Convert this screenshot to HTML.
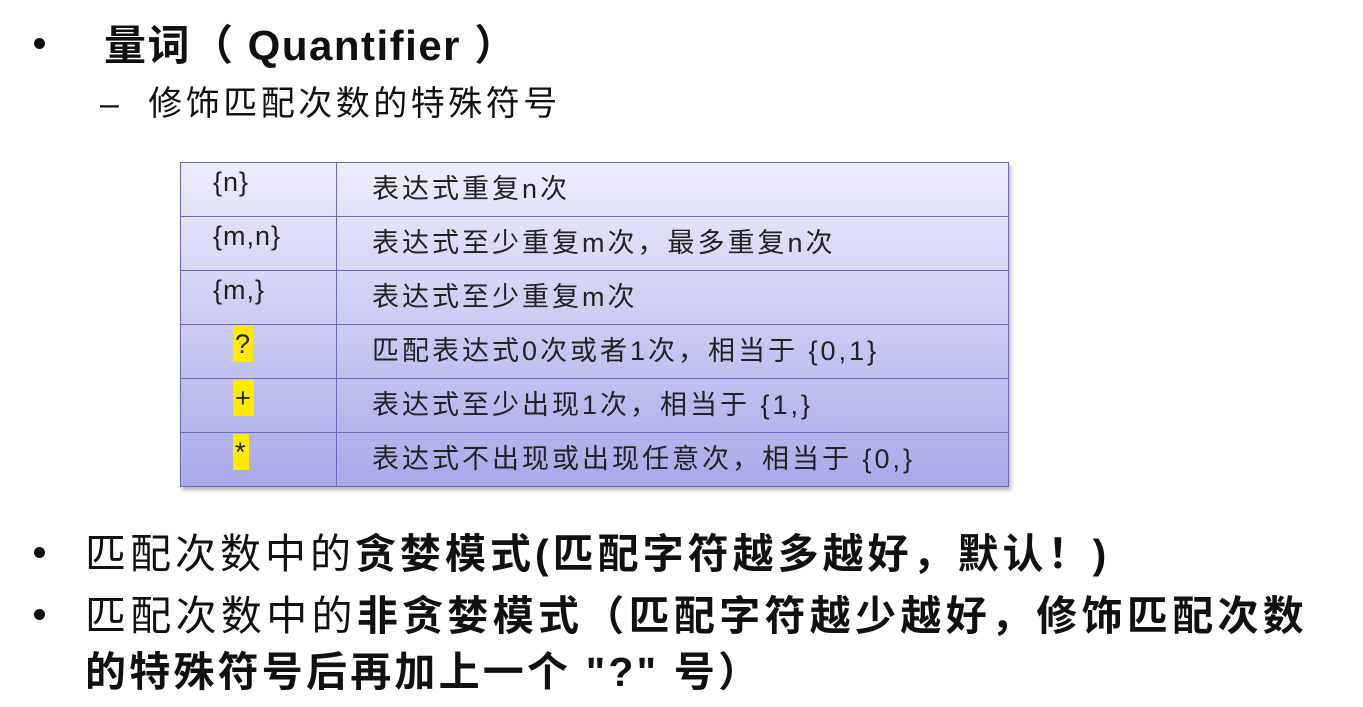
<!DOCTYPE html>
<html><head><meta charset="utf-8"><style>
body{margin:0;width:1363px;height:707px;background:#fff;position:relative;overflow:hidden;font-family:"Liberation Sans","Noto Sans CJK SC",sans-serif;color:#111}
.a{position:absolute;white-space:nowrap}
table{position:absolute;left:180px;top:162px;width:829px;height:325px;border-collapse:collapse;table-layout:fixed;background:linear-gradient(#ededfb,#a9a9ea);box-shadow:2px 3px 4px rgba(0,0,0,.3)}
td{border:1.5px solid #6a6ac0;font-size:27px;color:#222;padding:0;vertical-align:top;padding-top:4px;box-sizing:border-box;white-space:nowrap}
td.k{padding-left:32px;letter-spacing:1px}
td.v{padding-left:35px;letter-spacing:3px}
.y{background:#ffea00;padding:3px 2px}
.c{padding-left:20px}
.dot{position:absolute;width:11px;height:11px;border-radius:50%;background:#111}
</style></head><body>
<div class="dot" style="left:34px;top:38px"></div>
<div class="a" style="left:104px;top:12px;font-size:42px;font-weight:bold;letter-spacing:1.5px">量词（ Quantifier ）</div>
<div class="a" style="left:100px;top:76px;font-size:34px;letter-spacing:3.5px">–&nbsp; 修饰匹配次数的特殊符号</div>
<table>
<colgroup><col style="width:156px"><col></colgroup>
<tr><td class="k">{n}</td><td class="v">表达式重复n次</td></tr>
<tr><td class="k">{m,n}</td><td class="v">表达式至少重复m次，最多重复n次</td></tr>
<tr><td class="k">{m,}</td><td class="v">表达式至少重复m次</td></tr>
<tr><td class="k"><span class="c"><span class="y">?</span></span></td><td class="v">匹配表达式0次或者1次，相当于 {0,1}</td></tr>
<tr><td class="k"><span class="c"><span class="y">+</span></span></td><td class="v">表达式至少出现1次，相当于 {1,}</td></tr>
<tr><td class="k"><span class="c"><span class="y">*</span></span></td><td class="v">表达式不出现或出现任意次，相当于 {0,}</td></tr>
</table>
<div class="dot" style="left:34px;top:547px"></div>
<div class="a" style="left:85px;top:520px;font-size:41px;letter-spacing:4px">匹配次数中的<b>贪婪模式(匹配字符越多越好，默认！)</b></div>
<div class="dot" style="left:34px;top:609px"></div>
<div class="a" style="left:85px;top:582px;font-size:41px;letter-spacing:4.3px">匹配次数中的<b>非贪婪模式（匹配字符越少越好，修饰匹配次数</b></div>
<div class="a" style="left:85px;top:638px;font-size:41px;letter-spacing:3.2px"><b>的特殊符号后再加上一个 "?" 号）</b></div>
</body></html>
